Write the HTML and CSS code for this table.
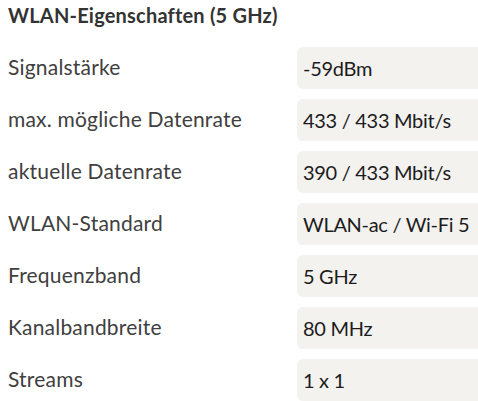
FILE: index.html
```html
<!DOCTYPE html>
<html lang="de">
<head>
<meta charset="utf-8">
<link rel="stylesheet" href="styles.css">
</head>
<body>
<section class="panel">
  <h2 class="title">WLAN-Eigenschaften (5 GHz)</h2>
  <dl class="props">
    <dt class="label">Signalstärke</dt><dd class="value">-59dBm</dd>
    <dt class="label">max. mögliche Datenrate</dt><dd class="value">433 / 433 Mbit/s</dd>
    <dt class="label">aktuelle Datenrate</dt><dd class="value">390 / 433 Mbit/s</dd>
    <dt class="label">WLAN-Standard</dt><dd class="value">WLAN-ac / Wi-Fi 5</dd>
    <dt class="label">Frequenzband</dt><dd class="value">5 GHz</dd>
    <dt class="label">Kanalbandbreite</dt><dd class="value">80 MHz</dd>
    <dt class="label">Streams</dt><dd class="value">1 x 1</dd>
  </dl>
</section>
</body>
</html>
```
FILE: styles.css
```css
html, body {
  margin: 0;
  padding: 0;
  background: #ffffff;
  overflow: hidden;
}
body {
  font-family: Lato, "Noto Sans", sans-serif;
  color: #3a3a3a;
}
.panel {
  padding: 0 0 0 8px;
}
.title {
  margin: 0;
  padding-top: 2px;
  height: 45px;
  font-size: 20px;
  font-weight: 700;
  letter-spacing: 0.2px;
  color: #333333;
  line-height: 26px;
}
.props {
  margin: 0;
  display: grid;
  grid-template-columns: 289px 1fr;
  row-gap: 10px;
}
.label {
  margin: 0;
  height: 42px;
  padding-bottom: 3px;
  box-sizing: border-box;
  display: flex;
  align-items: center;
  font-size: 21px;
  letter-spacing: 0.2px;
  color: #404040;
}
.value {
  margin: 0;
  height: 42px;
  display: flex;
  align-items: center;
  padding-left: 6px;
  background: #f3f2ef;
  border-radius: 6px 0 0 6px;
  font-size: 20px;
  letter-spacing: -0.3px;
  color: #1c1c1c;
}
```
